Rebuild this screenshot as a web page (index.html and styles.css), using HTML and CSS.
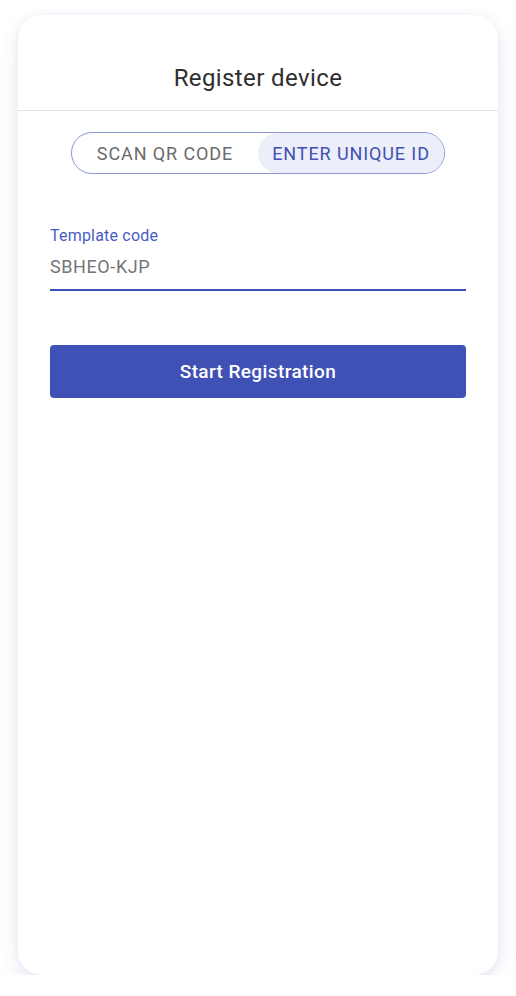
FILE: index.html
```html
<!DOCTYPE html>
<html>
<head>
<meta charset="utf-8">
<link rel="stylesheet" href="styles.css">
</head>
<body>
<div class="card">
  <div class="header">
    <h1 class="title">Register device</h1>
  </div>
  <div class="content">
    <div class="toggle-wrap">
      <div class="toggle">
        <div class="seg">SCAN QR CODE</div>
        <div class="seg active">ENTER UNIQUE ID</div>
      </div>
    </div>
    <div class="field">
      <div class="label">Template code</div>
      <div class="value">SBHEO-KJP</div>
    </div>
    <button class="btn">Start Registration</button>
  </div>
</div>
</body>
</html>
```
FILE: styles.css
```css
html, body {
  margin: 0;
  padding: 0;
  background: #ffffff;
  font-family: Roboto, "Noto Sans", sans-serif;
}
body {
  padding: 15px 18px 0 18px;
}
.card {
  width: 480px;
  height: 960px;
  background: #fff;
  border-radius: 24px;
  box-shadow: 0 8px 20px rgba(63, 81, 181, 0.12), 0 0 8px rgba(63, 81, 181, 0.06);
  box-sizing: border-box;
}
.header {
  height: 96px;
  border-bottom: 1.5px solid #e3e3e6;
  box-sizing: border-box;
  display: flex;
  align-items: flex-start;
  justify-content: center;
}
.title {
  margin: 49px 0 0 0;
  font-size: 24px;
  font-weight: 400;
  color: #2e2e2e;
  line-height: 28px;
  letter-spacing: 0.4px;
}
.content {
  padding: 21px 32px 0 32px;
}
.toggle-wrap {
  display: flex;
  justify-content: center;
}
.toggle {
  display: flex;
  border: 1px solid #8c96d6;
  border-radius: 22px;
  overflow: hidden;
  height: 42px;
  box-sizing: border-box;
}
.seg {
  width: 186px;
  display: flex;
  align-items: center;
  justify-content: center;
  font-size: 18px;
  color: #6b6b6b;
  letter-spacing: 0.9px;
}
.seg.active {
  background: #eceef9;
  color: #3f51b5;
  border-radius: 22px 0 0 22px;
}
.field {
  margin-top: 52px;
  border-bottom: 2px solid #3f51b5;
  padding-bottom: 11px;
}
.label {
  font-size: 16px;
  color: #4a5cc4;
  line-height: 20px;
  letter-spacing: 0.2px;
}
.value {
  margin-top: 10px;
  font-size: 18px;
  color: #757575;
  line-height: 22px;
  letter-spacing: 0.6px;
}
.btn {
  margin-top: 54px;
  width: 100%;
  height: 53px;
  background: #3f51b5;
  border: none;
  border-radius: 4px;
  color: #fff;
  font-family: Roboto, sans-serif;
  font-size: 19px;
  font-weight: 500;
  letter-spacing: 0.4px;
}
```
